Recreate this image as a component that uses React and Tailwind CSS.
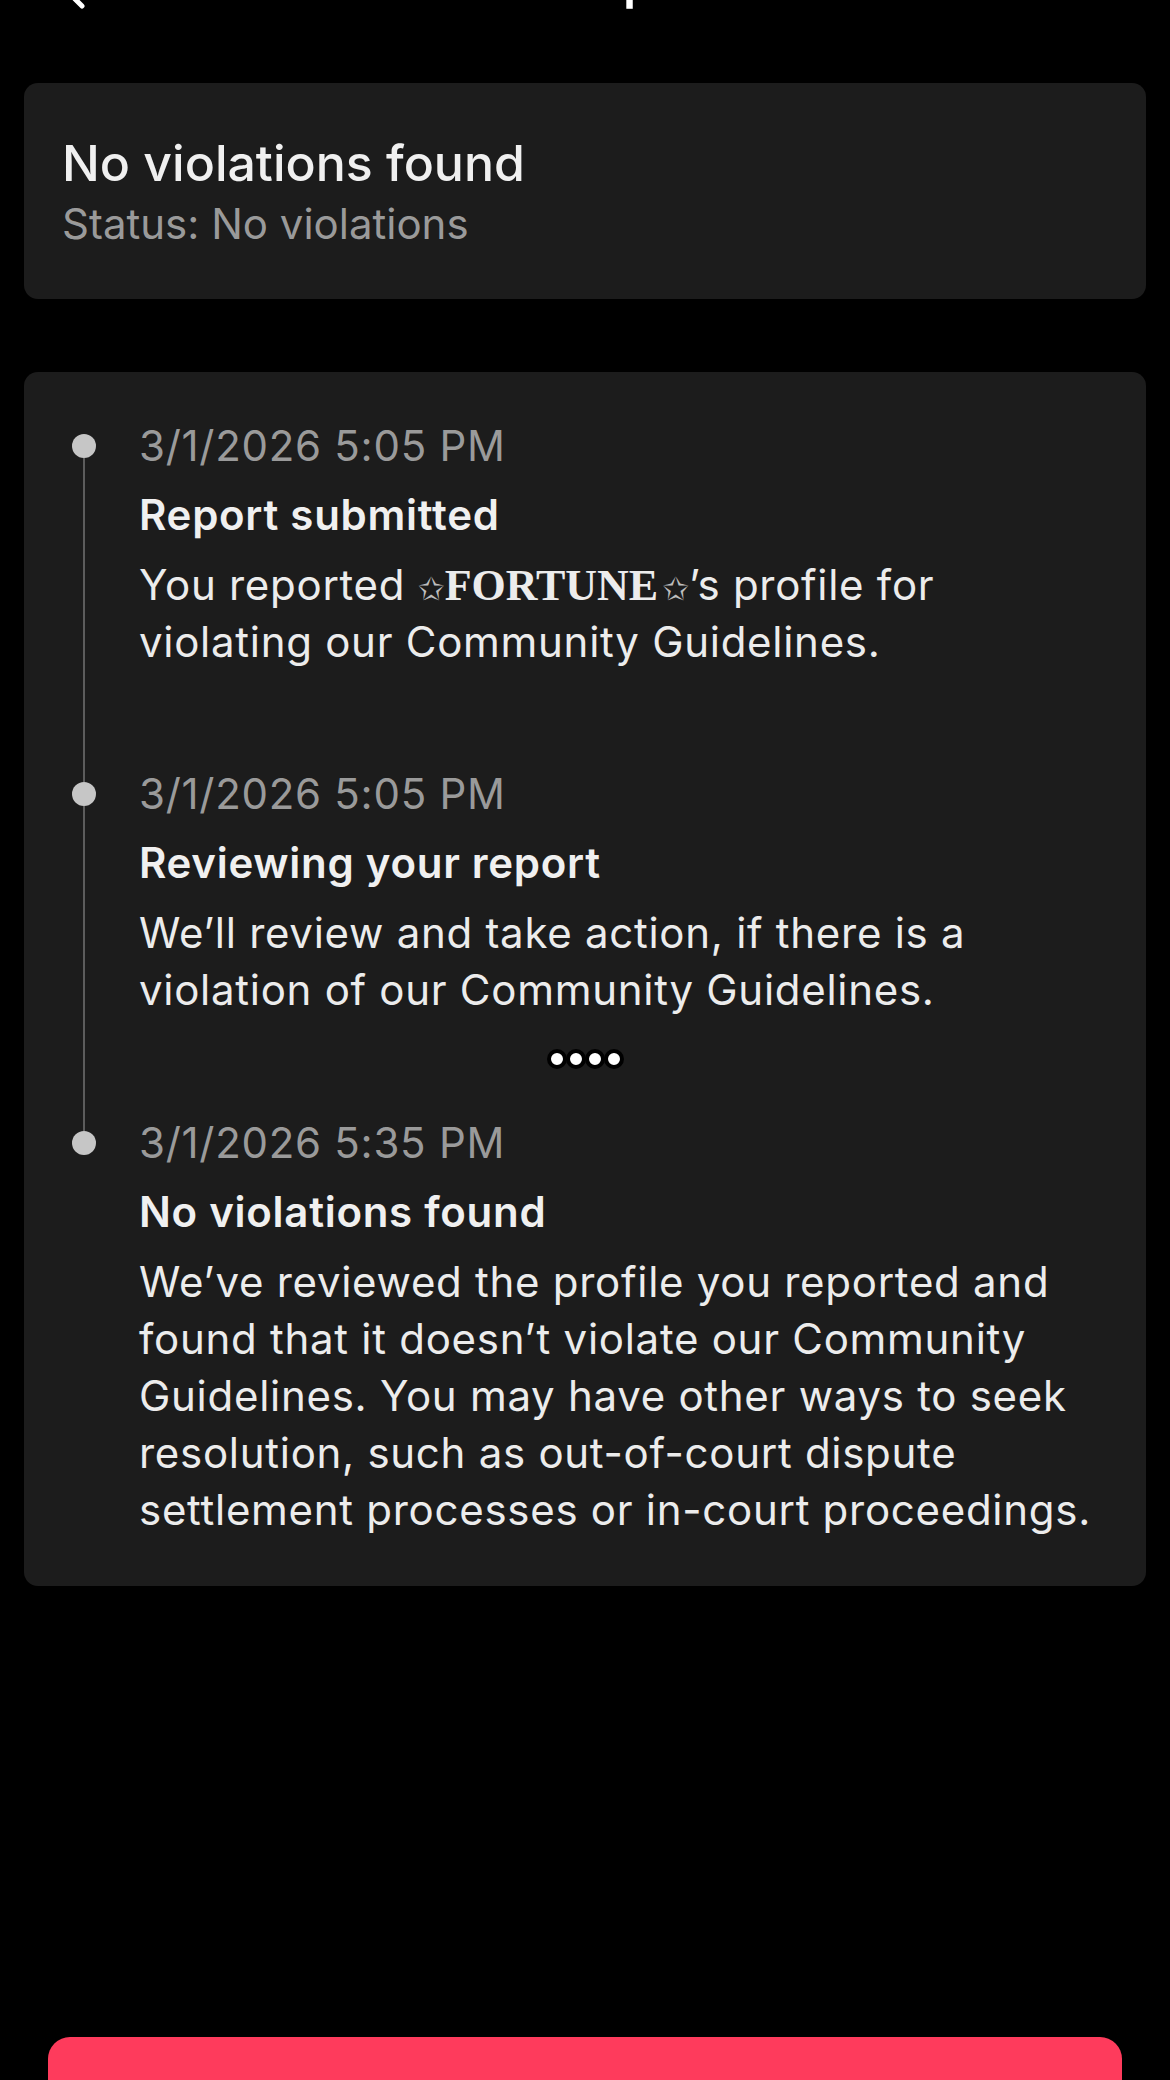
import React from 'react';

const steps = [
  {
    time: '3/1/2026 5:05 PM',
    title: 'Report submitted',
    body: (
      <>
        You reported{' '}
        <span className="whitespace-nowrap leading-none">
          <span className="leading-none tracking-normal text-[32px] text-[#bdbdbd] [font-family:'DejaVu_Sans',sans-serif]">✩</span>
          <span className="leading-none tracking-normal text-[44px] font-bold [font-family:'Liberation_Serif',serif]">FORTUNE</span>
          <span className="leading-none tracking-normal ml-[4px] text-[32px] text-[#bdbdbd] [font-family:'DejaVu_Sans',sans-serif]">✩</span>
        </span>
        ’s profile for
        <br />
        violating our Community Guidelines.
      </>
    ),
  },
  {
    time: '3/1/2026 5:05 PM',
    title: 'Reviewing your report',
    body: 'We’ll review and take action, if there is a violation of our Community Guidelines.',
  },
  {
    time: '3/1/2026 5:35 PM',
    title: 'No violations found',
    body: 'We’ve reviewed the profile you reported and found that it doesn’t violate our Community Guidelines. You may have other ways to seek resolution, such as out-of-court dispute settlement processes or in-court proceedings.',
  },
];

// left rail: line above the dot, dot, line below
function Rail({ top, bottom }) {
  return (
    <div className="w-[24px] flex flex-col items-center shrink-0">
      <div className={`h-[17px] w-[2px] ${top ? 'bg-[#5c5c5c]' : 'bg-transparent'}`} />
      <div className="w-[24px] h-[24px] rounded-full bg-[#c6c6c6] shrink-0" />
      <div className={`flex-1 w-[2px] ${bottom ? 'bg-[#5c5c5c]' : 'bg-transparent'}`} />
    </div>
  );
}

function Step({ step, first, last, gap }) {
  return (
    <div className="flex gap-[43px]">
      <Rail top={!first} bottom={!last} />
      <div className={`flex-1 tracking-[0.045em] ${gap}`}>
        <div className="h-[57px] text-[42px] leading-[57px] text-[#9a9a9a]">{step.time}</div>
        <div className="mt-[12px] h-[57px] text-[42px] leading-[57px] font-semibold text-[#f0f0f0]">{step.title}</div>
        <div className="mt-[13px] text-[42px] leading-[57px] text-[#ececec]">{step.body}</div>
      </div>
    </div>
  );
}

function MoreDots() {
  return (
    <div className="flex gap-[43px]">
      <div className="w-[24px] flex justify-center shrink-0">
        <div className="w-[2px] bg-[#5c5c5c]" />
      </div>
      <div className="flex-1 flex justify-center pr-[85px] pt-[31px] pb-[45px]">
        <div className="flex">
          {[0, 1, 2, 3].map((i) => (
            <div key={i} className="w-[20px] h-[20px] -mr-[1px] rounded-full bg-white border-[4px] border-black" />
          ))}
        </div>
      </div>
    </div>
  );
}

export default function App() {
  return (
    <div className="min-h-screen bg-black overflow-hidden [font-family:Inter,'Noto_Sans',sans-serif]">
      {/* header, scrolled mostly out of view */}
      <div className="-mt-[49px] h-[60px] flex items-center px-[50px]">
        <svg width="40" height="60" viewBox="0 0 40 60" className="shrink-0">
          <polyline points="32,15 12,35 32,55" fill="none" stroke="white" strokeWidth="5" strokeLinecap="round" strokeLinejoin="round" />
        </svg>
        <div className="flex-1 text-center text-[50px] leading-[60px] font-semibold text-white pr-[82px]">Profile report</div>
      </div>

      <div className="px-[24px]">
        <div className="mt-[72px] bg-[#1c1c1c] rounded-[14px] px-[38px] py-[50px]">
          <div className="text-[50px] leading-[60px] font-medium text-[#f0f0f0]">No violations found</div>
          <div className="mt-[6px] text-[42px] leading-[50px] text-[#9a9a9a]">Status: No violations</div>
        </div>

        <div className="mt-[73px] bg-[#1c1c1c] rounded-[14px] pl-[48px] pr-[30px] pt-[45px] pb-[48px]">
          <Step step={steps[0]} first gap="pb-[95px]" />
          <Step step={steps[1]} gap="" />
          <MoreDots />
          <Step step={steps[2]} last gap="" />
        </div>
      </div>

      <div className="mx-[48px] mt-[451px] h-[120px] rounded-[22px] bg-[#fe3b5c]" />
    </div>
  );
}
